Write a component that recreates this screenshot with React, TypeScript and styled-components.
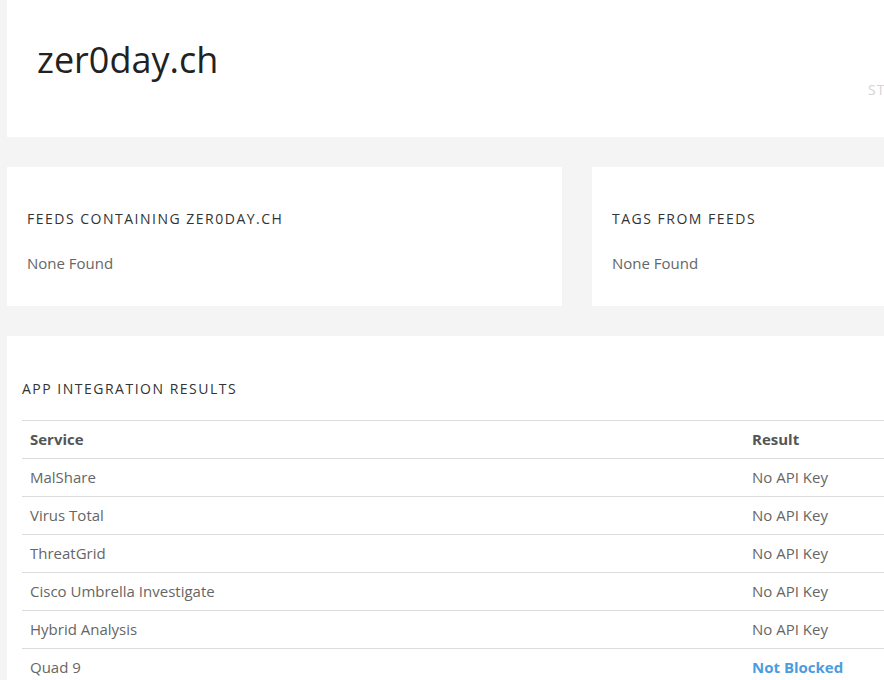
import React from "react";
import styled, { createGlobalStyle } from "styled-components";

const Global = createGlobalStyle`
  html, body { margin: 0; padding: 0; background: #f4f4f4; overflow: hidden; }
  body { font-family: "Open Sans", "Liberation Sans", sans-serif; color: #666; }
`;

const Page = styled.div`
  width: 1140px;
  margin-left: 7px;
  display: flex;
  flex-direction: column;
  gap: 30px;
`;

const Header = styled.header`
  background: #fff;
  height: 137px;
  box-sizing: border-box;
  display: grid;
  grid-template-columns: 831px 1fr;
  padding: 38px 0 0 30px;
`;

const Title = styled.h1`
  margin: 0;
  font-size: 36px;
  line-height: 43px;
  font-weight: 400;
  color: #222;
`;

const Nav = styled.div`
  padding-top: 43px;
  font-size: 14px;
  line-height: 18px;
  letter-spacing: 1px;
  color: #d4d4d4;
  text-transform: uppercase;
  white-space: nowrap;
`;

const Row = styled.div`
  display: grid;
  grid-template-columns: 555px 555px;
  gap: 30px;
`;

const Card = styled.section<{ $padX: number; $padTop: number; $padBottom: number }>`
  background: #fff;
  box-sizing: border-box;
  padding: ${(p) => p.$padTop}px ${(p) => p.$padX}px ${(p) => p.$padBottom}px;
`;

const Heading = styled.h2`
  margin: 0;
  font-size: 14px;
  line-height: 17px;
  font-weight: 400;
  letter-spacing: 1.5px;
  text-transform: uppercase;
  color: #333;
`;

const Empty = styled.p`
  margin: 25px 0 0;
  font-size: 15px;
  line-height: 22px;
  color: #666;
`;

const Table = styled.table`
  margin-top: 23px;
  width: 100%;
  border-collapse: collapse;
  table-layout: fixed;
  font-size: 15px;
`;

const Th = styled.th<{ $w?: number }>`
  text-align: left;
  font-weight: 700;
  color: #555;
  padding: 8px;
  line-height: 21px;
  border-top: 1px solid #ddd;
  width: ${(p) => (p.$w ? `${p.$w - 16}px` : "auto")};
`;

const Td = styled.td<{ $blue?: boolean }>`
  padding: 8px;
  line-height: 21px;
  border-top: 1px solid #ddd;
  color: ${(p) => (p.$blue ? "#4a9de0" : "#666")};
  font-weight: ${(p) => (p.$blue ? 700 : 400)};
`;

const rows: [string, string][] = [
  ["MalShare", "No API Key"],
  ["Virus Total", "No API Key"],
  ["ThreatGrid", "No API Key"],
  ["Cisco Umbrella Investigate", "No API Key"],
  ["Hybrid Analysis", "No API Key"],
  ["Quad 9", "Not Blocked"],
];

export default function App() {
  return (
    <>
      <Global />
      <Page>
        <Header>
          <Title>zer0day.ch</Title>
          <Nav>Status</Nav>
        </Header>
        <Row>
          <Card $padX={20} $padTop={43} $padBottom={32}>
            <Heading>Feeds containing zer0day.ch</Heading>
            <Empty>None Found</Empty>
          </Card>
          <Card $padX={20} $padTop={43} $padBottom={32}>
            <Heading>Tags from feeds</Heading>
            <Empty>None Found</Empty>
          </Card>
        </Row>
        <Card $padX={15} $padTop={44} $padBottom={30}>
          <Heading>App Integration Results</Heading>
          <Table>
            <thead>
              <tr>
                <Th $w={722}>Service</Th>
                <Th>Result</Th>
              </tr>
            </thead>
            <tbody>
              {rows.map(([s, r]) => (
                <tr key={s}>
                  <Td>{s}</Td>
                  <Td $blue={r === "Not Blocked"}>{r}</Td>
                </tr>
              ))}
            </tbody>
          </Table>
        </Card>
      </Page>
    </>
  );
}
